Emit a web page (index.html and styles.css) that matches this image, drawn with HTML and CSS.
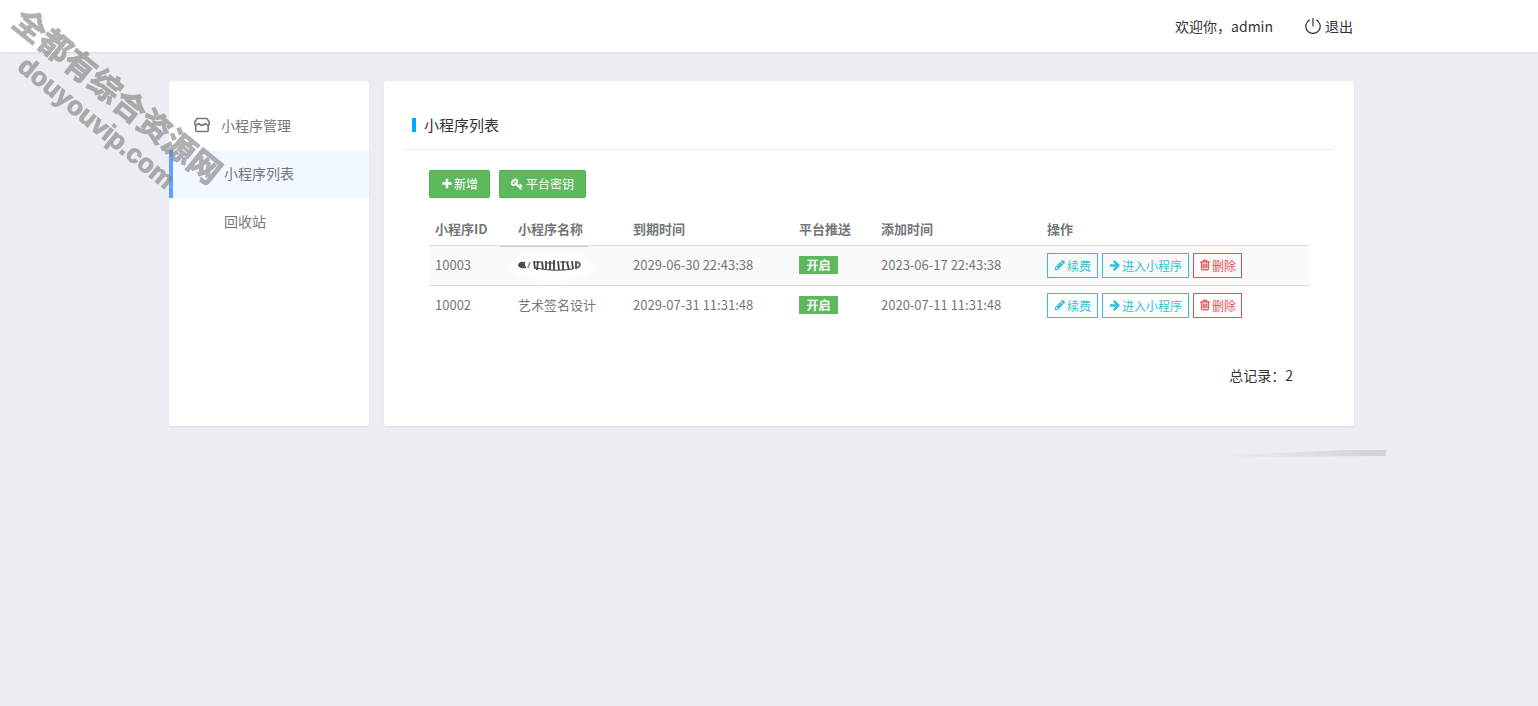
FILE: index.html
```html
<!DOCTYPE html>
<html lang="zh-CN">
<head>
<meta charset="utf-8">
<title>小程序列表</title>
<link rel="stylesheet" href="styles.css">
</head>
<body>
<svg class="defs" aria-hidden="true">
  <symbol id="plus" viewBox="0 0 1792 1792"><path d="M1600 736v192q0 40-28 68t-68 28h-416v416q0 40-28 68t-68 28h-192q-40 0-68-28t-28-68v-416h-416q-40 0-68-28t-28-68v-192q0-40 28-68t68-28h416v-416q0-40 28-68t68-28h192q40 0 68 28t28 68v416h416q40 0 68 28t28 68z"/></symbol>
  <symbol id="key" viewBox="0 0 1792 1792"><path stroke="currentColor" stroke-width="80" d="M832 512q0-80-56-136t-136-56-136 56-56 136q0 42 19 83-41-19-83-19-80 0-136 56t-56 136 56 136 136 56 136-56 56-136q0-42-19-83 41 19 83 19 80 0 136-56t56-136zm851 704q0 17-49 66t-66 49q-9 0-28.500-16t-36.500-33-38.500-40-24.500-26l-96 96 220 220q28 28 28 68 0 42-39 81t-81 39q-40 0-68-28l-671-671q-176 131-365 131-163 0-265.500-102.500t-102.500-265.500q0-160 95-313t248-248 313-95q163 0 265.500 102.500t102.500 265.500q0 189-131 365l355 355 96-96q-3-3-26-24.500t-40-38.500-33-36.500-16-28.500q0-17 49-66t66-49q13 0 23 10 6 6 46 44.500t82 79.500 86.500 86 73 78 28.500 41z"/></symbol>
  <symbol id="pencil" viewBox="0 0 1792 1792"><path d="M491 1536l91-91-235-235-91 91v107h128v128h107zm523-928q0-22-22-22-10 0-17 7l-542 542q-7 7-7 17 0 22 22 22 10 0 17-7l542-542q7-7 7-17zm-54-192l416 416-832 832h-416v-416zm683 96q0 53-37 90l-166 166-416-416 166-165q36-38 90-38 53 0 91 38l235 234q37 39 37 91z"/></symbol>
  <symbol id="arrow" viewBox="0 0 1792 1792"><path d="M1600 960q0 54-37 91l-651 651q-39 37-91 37-51 0-90-37l-75-75q-38-38-38-91t38-91l293-293h-704q-52 0-84.500-37.500t-32.500-90.500v-128q0-53 32.500-90.500t84.500-37.500h704l-293-294q-38-36-38-90t38-90l75-75q38-38 90-38 53 0 91 38l651 651q37 35 37 90z"/></symbol>
  <symbol id="trash" viewBox="0 0 1792 1792"><path stroke="currentColor" stroke-width="60" d="M704 736v576q0 14-9 23t-23 9h-64q-14 0-23-9t-9-23v-576q0-14 9-23t23-9h64q14 0 23 9t9 23zm256 0v576q0 14-9 23t-23 9h-64q-14 0-23-9t-9-23v-576q0-14 9-23t23-9h64q14 0 23 9t9 23zm256 0v576q0 14-9 23t-23 9h-64q-14 0-23-9t-9-23v-576q0-14 9-23t23-9h64q14 0 23 9t9 23zm128 724v-948h-896v948q0 22 7 40.500t14.500 27 10.500 8.500h832q3 0 10.500-8.500t14.500-27 7-40.500zm-672-1076h448l-48-117q-7-9-17-11h-317q-10 2-17 11zm928 32v64q0 14-9 23t-23 9h-96v948q0 83-47 143.500t-113 60.500h-832q-66 0-113-58.500t-47-141.500v-952h-96q-14 0-23-9t-9-23v-64q0-14 9-23t23-9h309l70-167q15-37 54-63t79-26h320q40 0 79 26t54 63l70 167h309q14 0 23 9t9 23z"/></symbol>
</svg>

<header class="topbar">
  <div class="container topbar-inner">
    <span>欢迎你，admin</span>
    <a class="logout" href="#">
      <svg class="power" viewBox="0 0 16 16" aria-hidden="true"><path d="M4.600 1.900a7.200 7.200 0 1 0 6.800 0M8 0v8.500"/></svg>
      退出
    </a>
  </div>
</header>

<div class="container layout">
  <nav class="card sidebar">
    <div class="menu-title">
      <svg class="shop" viewBox="0 0 16 16" aria-hidden="true"><path d="M3 1.500h10l2.200 3.500v2.500q-1.200 1.300-2.600 0-1.200-1.700-2.300 0-1.100 1.300-2.300 0-1.200 1.300-2.300 0-1.100-1.700-2.300 0-1.400 1.300-2.600 0V5zM1.800 8v5.500q0 1 1 1h10.400q1 0 1-1V8"/></svg>
      小程序管理
    </div>
    <a class="menu-item active" href="#">小程序列表</a>
    <a class="menu-item" href="#">回收站</a>
  </nav>

  <main class="card content">
    <h1 class="page-title">小程序列表</h1>
    <div class="panel">
      <div class="toolbar">
        <button class="btn" type="button"><svg class="icon" aria-hidden="true"><use href="#plus"/></svg>新增</button>
        <button class="btn" type="button"><svg class="icon wide" aria-hidden="true"><use href="#key"/></svg>平台密钥</button>
      </div>
      <table class="list">
        <thead>
          <tr><th class="c-id">小程序ID</th><th class="c-name">小程序名称</th><th class="c-time">到期时间</th><th class="c-push">平台推送</th><th class="c-time">添加时间</th><th>操作</th></tr>
        </thead>
        <tbody>
          <tr class="striped">
            <td>10003</td>
            <td class="masked">
              <svg class="scribble" viewBox="0 0 110 40" aria-hidden="true">
                <defs><filter id="soft"><feGaussianBlur stdDeviation="0.5"/></filter><filter id="haze"><feGaussianBlur stdDeviation="3"/></filter></defs>
                <ellipse cx="52" cy="20" rx="42" ry="13" fill="#fff" filter="url(#haze)"/>
                <path d="M0 .5h88" stroke="#ccc" stroke-width="1"/>
                <g filter="url(#soft)" fill="none" stroke="#444" stroke-width="1.800">
                  <path d="M25 17q-5-1-6 2 1 3 7 2M20 19h5" stroke-width="2"/>
                  <path d="M30 16l-2 6" stroke="#999"/>
                  <path d="M34 15l1 8M38 15l-1 9M42 16l1 7M46 15v8M50 15v9M54 14v10M58 15l1 9M63 15v9M67 16l2 8M72 15l1 8M76 16v7"/>
                  <path d="M36 22q18 4 37 1M34 16h9M47 17h8M60 16h9" stroke-width="1"/>
                  <path d="M75 16q5 0 5 3-1 3-5 3" stroke="#666" stroke-width="2"/>
                </g>
              </svg>
            </td>
            <td>2029-06-30 22:43:38</td>
            <td><span class="badge">开启</span></td>
            <td>2023-06-17 22:43:38</td>
            <td>
              <div class="actions">
                <button class="op" type="button"><svg class="icon" aria-hidden="true"><use href="#pencil"/></svg>续费</button>
                <button class="op" type="button"><svg class="icon" aria-hidden="true"><use href="#arrow"/></svg>进入小程序</button>
                <button class="op danger" type="button"><svg class="icon" aria-hidden="true"><use href="#trash"/></svg>删除</button>
              </div>
            </td>
          </tr>
          <tr>
            <td>10002</td>
            <td>艺术签名设计</td>
            <td>2029-07-31 11:31:48</td>
            <td><span class="badge">开启</span></td>
            <td>2020-07-11 11:31:48</td>
            <td>
              <div class="actions">
                <button class="op" type="button"><svg class="icon" aria-hidden="true"><use href="#pencil"/></svg>续费</button>
                <button class="op" type="button"><svg class="icon" aria-hidden="true"><use href="#arrow"/></svg>进入小程序</button>
                <button class="op danger" type="button"><svg class="icon" aria-hidden="true"><use href="#trash"/></svg>删除</button>
              </div>
            </td>
          </tr>
        </tbody>
      </table>
      <p class="total">总记录：2</p>
    </div>
  </main>
</div>

<svg class="streak" viewBox="0 0 700 80" aria-hidden="true">
  <defs>
    <linearGradient id="fade"><stop offset="0" stop-color="#d4d5d8" stop-opacity="0"/><stop offset="1" stop-color="#d0d2d5"/></linearGradient>
    <filter id="blur"><feGaussianBlur stdDeviation="8"/></filter>
  </defs>
  <path d="M20 30Q300 5 660 20L670 50Q300 45 30 60z" fill="#eff0f2" opacity=".4" filter="url(#blur)"/>
  <path d="M500 16L635 10H676V16L540 17z" fill="url(#fade)"/>
</svg>

<div class="watermark" aria-hidden="true">
  <div class="wm-name">全都有综合资源网</div>
  <div class="wm-site">douyouvip.com</div>
</div>
</body>
</html>
```

FILE: styles.css
```css
* { box-sizing: border-box; }

body {
  margin: 0;
  min-height: 100vh;
  position: relative;
  background: #ecedf3;
  color: #333;
  font: 14px/20px "Noto Sans CJK SC", sans-serif;
}

a { color: inherit; text-decoration: none; }

button { font-family: inherit; cursor: pointer; }

.defs { position: absolute; width: 0; height: 0; }

.container {
  max-width: 1200px;
  margin: 0 auto;
  padding-right: 16px;
}

.topbar {
  background: #fff;
  box-shadow: 0 1px 2px rgba(0, 0, 0, .08);
}

.topbar-inner {
  height: 52px;
  display: flex;
  align-items: center;
  justify-content: flex-end;
  gap: 32px;
}

.logout { display: flex; align-items: center; gap: 4px; }

.power {
  width: 16px;
  height: 16px;
  fill: none;
  stroke: #333;
  stroke-width: 1.2;
}

.layout { display: flex; gap: 15px; margin-top: 29px; padding-right: 15px; }

.card {
  background: #fff;
  border-radius: 3px;
  box-shadow: 0 1px 2px rgba(0, 0, 0, .06);
}

.sidebar {
  flex: 0 0 200px;
  padding-top: 21px;
  color: #777;
  line-height: 46px;
}

.menu-title {
  display: flex;
  align-items: center;
  gap: 11px;
  height: 48px;
  padding: 0 0 2px 25px;
}

.shop {
  width: 16px;
  height: 16px;
  fill: none;
  stroke: #777;
  stroke-width: 1.6;
}

.menu-item {
  display: block;
  height: 48px;
  border-left: 4px solid transparent;
  padding-left: 51px;
}

.active { background: #f2f8ff; border-left-color: #659fff; }

.content { flex: 1; min-width: 0; padding: 20px 20px 41px; }

.page-title {
  display: flex;
  align-items: center;
  gap: 8px;
  height: 49px;
  margin: 0;
  padding-left: 8px;
  border-bottom: 1px solid #eee;
  font-size: 15px;
  font-weight: 400;
}

.page-title::before {
  content: "";
  width: 4px;
  height: 14px;
  background: #0af;
}

.panel { padding: 20px 25px 0; }

.toolbar { display: flex; gap: 9px; margin-bottom: 15px; }

.btn {
  display: flex;
  align-items: center;
  gap: 1px;
  height: 28px;
  padding: 0 11px 1px;
  border: 1px solid #4cae4c;
  border-radius: 2px;
  background: #5eb95e;
  color: #fff;
  font-size: 12px;
}

.icon { width: 12px; height: 12px; fill: currentColor; }

.wide { margin-right: 2px; }

.list {
  width: 100%;
  border-collapse: collapse;
  table-layout: fixed;
  color: #73777a;
  font-size: 13px;
}

.list th {
  height: 32px;
  padding: 0 6px;
  text-align: left;
}

.list td {
  height: 40px;
  padding: 0 6px;
  border-top: 1px solid #ddd;
}

.striped { background: #f9f9f9; }

.c-id { width: 83px; }
.c-name { width: 115px; }
.c-time { width: 166px; }
.c-push { width: 82px; }

.masked { position: relative; }

.scribble {
  position: absolute;
  left: -12px;
  top: 0;
  width: 110px;
  height: 40px;
}

.badge {
  display: block;
  width: 39px;
  background: #5eb95e;
  color: #fff;
  font-size: 12px;
  font-weight: 700;
  line-height: 18px;
  text-align: center;
}

.actions { display: flex; gap: 4px; }

.op {
  display: flex;
  align-items: center;
  gap: 1px;
  height: 25px;
  padding: 0 6px;
  border: 1px solid #36c0d4;
  background: #fff;
  color: #36c0d4;
  font-size: 12px;
}

.striped .op { background: transparent; }

.op.danger { padding: 0 5px; border-color: #e7505a; color: #e7505a; }

.total { margin: 40px 16px 0; text-align: right; }

.streak {
  position: absolute;
  left: 710px;
  top: 440px;
  width: 700px;
  height: 80px;
  pointer-events: none;
}

.watermark {
  position: absolute;
  left: 31px;
  top: 0;
  color: #808080;
  opacity: .62;
  font-weight: 700;
  white-space: nowrap;
  -webkit-text-stroke: 1px #808080;
  transform: rotate(39deg);
  transform-origin: 0 0;
  pointer-events: none;
}

.wm-name { font-size: 32px; line-height: 36px; }

.wm-site {
  margin: 2px 0 0 32px;
  font-family: "Liberation Sans", sans-serif;
  font-size: 26px;
  line-height: 32px;
}
```
